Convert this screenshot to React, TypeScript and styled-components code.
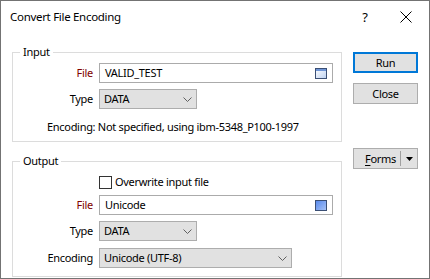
import React from "react";
import styled, { createGlobalStyle } from "styled-components";

const GlobalStyle = createGlobalStyle`
  html, body {
    margin: 0;
    padding: 0;
    background: #ffffff;
  }
  body {
    font-family: "Segoe UI", "Noto Sans", sans-serif;
    font-size: 11px;
    letter-spacing: -0.3px;
    line-height: 16px;
    color: #000000;
  }
`;

const Window = styled.div`
  width: 430px;
  height: 279px;
  box-sizing: border-box;
  border: 1px solid #737373;
  background: #ffffff;
  display: flex;
  flex-direction: column;
`;

const TitleBar = styled.div`
  height: 31px;
  display: flex;
  align-items: center;
  padding-left: 9px;
  font-size: 11.5px;
`;

const Title = styled.div`
  flex: 1;
`;

const HelpButton = styled.div`
  width: 20px;
  text-align: center;
  font-size: 13px;
  margin-right: 25px;
`;

const CloseButton = styled.div`
  width: 12px;
  height: 12px;
  margin-right: 17px;
  display: flex;
`;

const Body = styled.div`
  flex: 1;
  display: flex;
  padding: 12px 0 0 11px;
  gap: 11px;
`;

const Groups = styled.div`
  width: 330px;
  display: flex;
  flex-direction: column;
  gap: 11px;
`;

const GroupBox = styled.fieldset<{ $pad: number; $height: number }>`
  margin: 0;
  padding: ${(p) => p.$pad}px 0 0 0;
  border: 1px solid #dcdcdc;
  height: ${(p) => p.$height}px;
  box-sizing: border-box;
  display: flex;
  flex-direction: column;
  min-width: 0;
`;

const Caption = styled.legend`
  margin-left: 7px;
  padding: 0 3px;
  line-height: 16px;
`;

const Row = styled.div<{ $gap?: number }>`
  display: flex;
  align-items: center;
  min-height: 16px;
  margin-top: ${(p) => p.$gap ?? 0}px;
`;

const Label = styled.span<{ $required?: boolean }>`
  width: 80px;
  margin-right: 6px;
  text-align: right;
  color: ${(p) => (p.$required ? "#800000" : "#000000")};
`;

const InfoText = styled.div`
  padding: 10px 0 0 34px;
`;

const TextBox = styled.div`
  width: 234px;
  height: 20px;
  box-sizing: border-box;
  border: 1px solid #ababab;
  background: #ffffff;
  display: flex;
  align-items: center;
  padding: 0 5px 0 5px;
`;

const BoxText = styled.span`
  flex: 1;
`;

const ComboBox = styled.div<{ $width: number }>`
  width: ${(p) => p.$width}px;
  height: 20px;
  box-sizing: border-box;
  border: 1px solid #adadad;
  background: #e1e1e1;
  display: flex;
  align-items: center;
  padding: 0 4px 0 4px;
`;

const CheckBox = styled.span`
  width: 13px;
  height: 13px;
  box-sizing: border-box;
  border: 1px solid #333333;
  background: #ffffff;
  margin-right: 3px;
`;

const Buttons = styled.div`
  width: 65px;
  display: flex;
  flex-direction: column;
  padding-top: 8px;
`;

const Button = styled.div<{ $default?: boolean; $gap?: number }>`
  height: 21px;
  box-sizing: border-box;
  margin-top: ${(p) => p.$gap ?? 0}px;
  border: ${(p) => (p.$default ? "2px solid #0078d7" : "1px solid #adadad")};
  background: #e1e1e1;
  display: flex;
  align-items: center;
  justify-content: center;
`;

const SplitButton = styled.div`
  height: 21px;
  box-sizing: border-box;
  margin-top: 44px;
  border: 1px solid #adadad;
  background: #e1e1e1;
  display: flex;
  align-items: center;
`;

const SplitMain = styled.span`
  flex: 1;
  text-align: right;
  padding-right: 4px;
  u {
    text-decoration-thickness: 1px;
    text-underline-offset: 2px;
  }
`;

const SplitDivider = styled.span`
  width: 1px;
  height: 15px;
  background: #a0a0a0;
`;

const SplitArrow = styled.span`
  width: 16px;
  display: flex;
  justify-content: center;
`;

const FileIcon = ({ filled }: { filled?: boolean }) => (
  <svg width="12" height="11" viewBox="0 0 12 11">
    <defs>
      <linearGradient id={filled ? "gf" : "ge"} x1="0" y1="0" x2="1" y2="1">
        {filled ? (
          <>
            <stop offset="0" stopColor="#5587ec" />
            <stop offset="1" stopColor="#a9c4f6" />
          </>
        ) : (
          <>
            <stop offset="0" stopColor="#ffffff" />
            <stop offset="1" stopColor="#bcd0f0" />
          </>
        )}
      </linearGradient>
    </defs>
    <rect x="0.5" y="0.5" width="11" height="10" fill={`url(#${filled ? "gf" : "ge"})`} stroke="#3b4f74" />
    {!filled && <rect x="1" y="1" width="10" height="2" fill="#6f95d6" />}
  </svg>
);

const Chevron = () => (
  <svg width="9" height="5" viewBox="0 0 9 5">
    <path d="M0.5 0.5 L4.5 4.5 L8.5 0.5" fill="none" stroke="#606060" strokeWidth="1" />
  </svg>
);

const App = () => {
  return (
    <>
      <GlobalStyle />
      <Window>
        <TitleBar>
          <Title>Convert File Encoding</Title>
          <HelpButton>?</HelpButton>
          <CloseButton>
            <svg width="12" height="12" viewBox="0 0 12 12">
              <path d="M0.5 0.5 L11.5 11.5 M11.5 0.5 L0.5 11.5" stroke="#000" strokeWidth="1" />
            </svg>
          </CloseButton>
        </TitleBar>
        <Body>
          <Groups>
            <GroupBox $pad={3} $height={98}>
              <Caption>Input</Caption>
              <Row>
                <Label $required>File</Label>
                <TextBox>
                  <BoxText>VALID_TEST</BoxText>
                  <FileIcon />
                </TextBox>
              </Row>
              <Row $gap={6}>
                <Label>Type</Label>
                <ComboBox $width={98}>
                  <BoxText>DATA</BoxText>
                  <Chevron />
                </ComboBox>
              </Row>
              <InfoText>Encoding: Not specified, using ibm-5348_P100-1997</InfoText>
            </GroupBox>
            <GroupBox $pad={5} $height={124}>
              <Caption>Output</Caption>
              <Row>
                <Label />
                <CheckBox />
                <span>Overwrite input file</span>
              </Row>
              <Row $gap={5}>
                <Label $required>File</Label>
                <TextBox>
                  <BoxText>Unicode</BoxText>
                  <FileIcon filled />
                </TextBox>
              </Row>
              <Row $gap={6}>
                <Label>Type</Label>
                <ComboBox $width={98}>
                  <BoxText>DATA</BoxText>
                  <Chevron />
                </ComboBox>
              </Row>
              <Row $gap={7}>
                <Label>Encoding</Label>
                <ComboBox $width={193}>
                  <BoxText>Unicode (UTF-8)</BoxText>
                  <Chevron />
                </ComboBox>
              </Row>
            </GroupBox>
          </Groups>
          <Buttons>
            <Button $default>Run</Button>
            <Button $gap={10}>Close</Button>
            <SplitButton>
              <SplitMain>
                <u>F</u>orms
              </SplitMain>
              <SplitDivider />
              <SplitArrow>
                <svg width="7" height="4" viewBox="0 0 7 4">
                  <path d="M0 0 L7 0 L3.5 4 Z" fill="#000" />
                </svg>
              </SplitArrow>
            </SplitButton>
          </Buttons>
        </Body>
      </Window>
    </>
  );
};

export default App;
